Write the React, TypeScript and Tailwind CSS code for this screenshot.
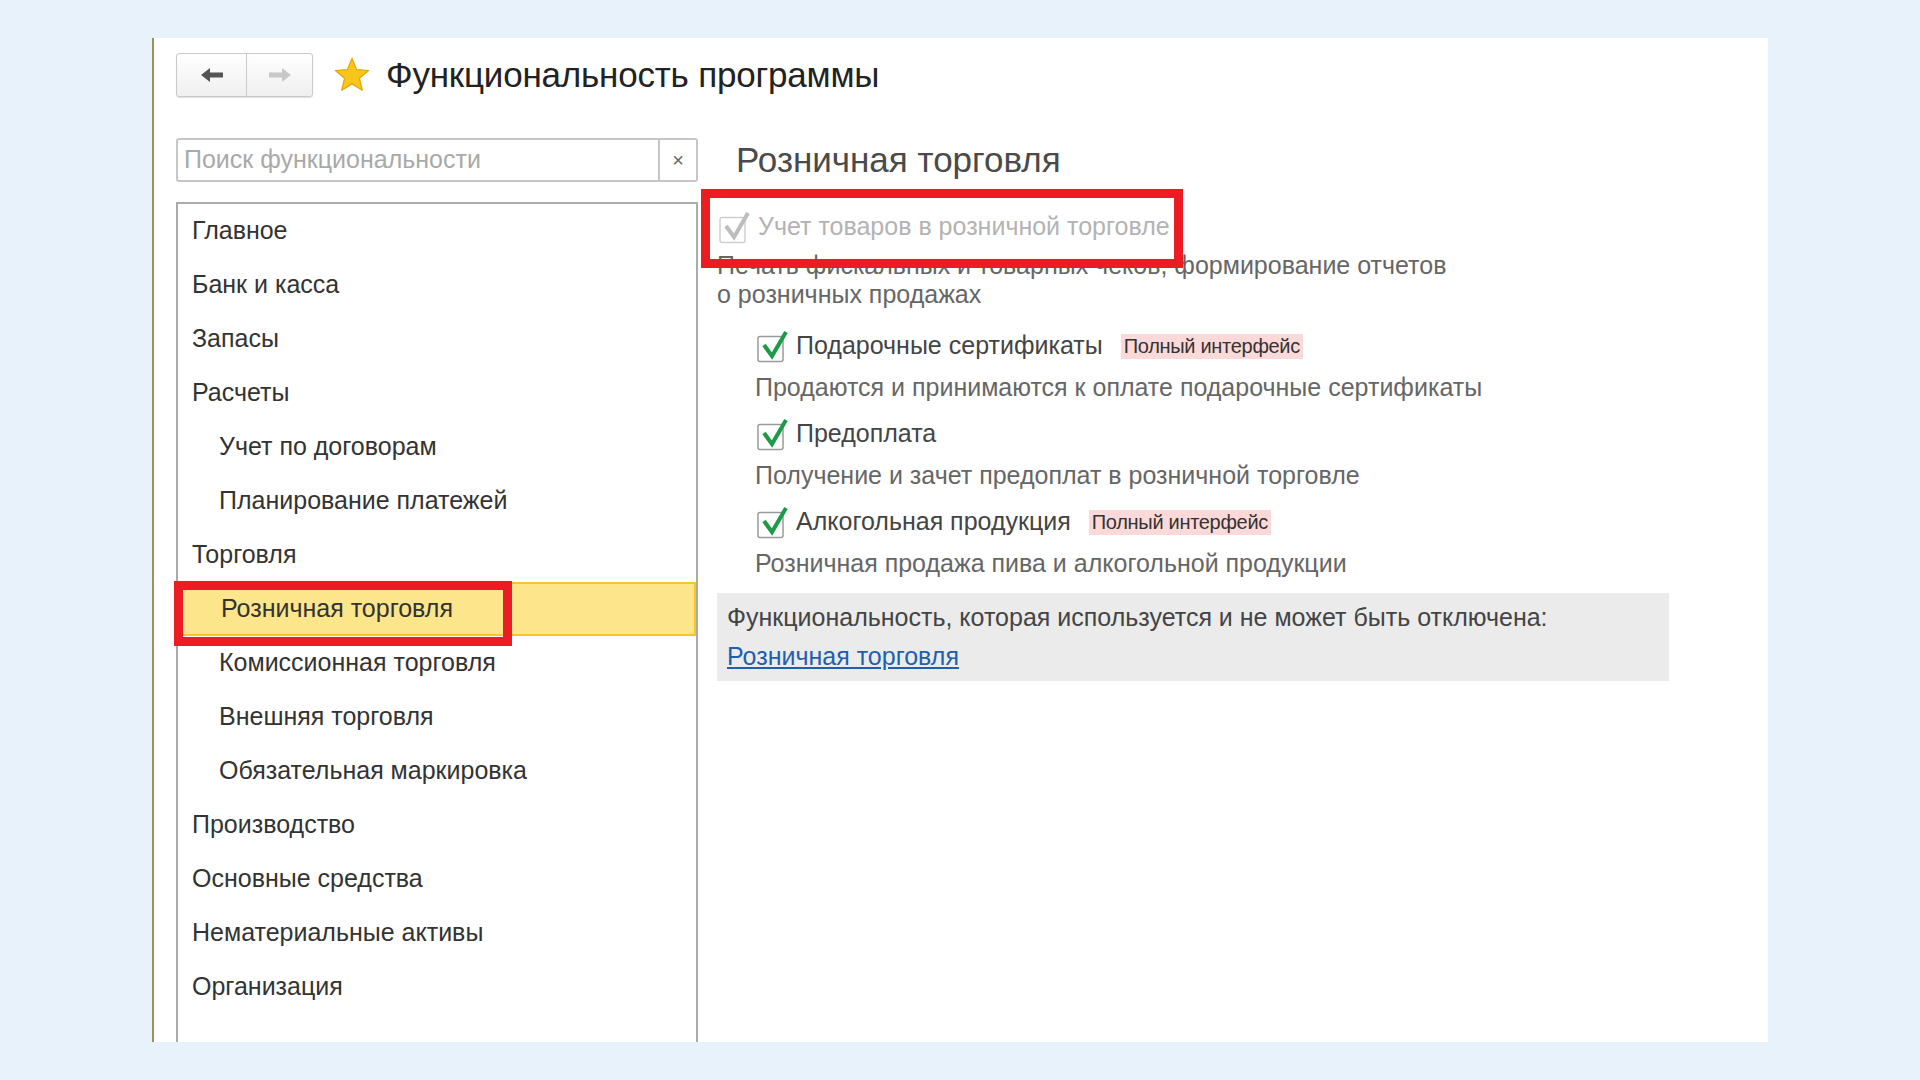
import React from 'react'

interface MenuItem {
  label: string
  level: 0 | 1
  selected?: boolean
}

const menu: MenuItem[] = [
  { label: 'Главное', level: 0 },
  { label: 'Банк и касса', level: 0 },
  { label: 'Запасы', level: 0 },
  { label: 'Расчеты', level: 0 },
  { label: 'Учет по договорам', level: 1 },
  { label: 'Планирование платежей', level: 1 },
  { label: 'Торговля', level: 0 },
  { label: 'Розничная торговля', level: 1, selected: true },
  { label: 'Комиссионная торговля', level: 1 },
  { label: 'Внешняя торговля', level: 1 },
  { label: 'Обязательная маркировка', level: 1 },
  { label: 'Производство', level: 0 },
  { label: 'Основные средства', level: 0 },
  { label: 'Нематериальные активы', level: 0 },
  { label: 'Организация', level: 0 },
]

interface Option {
  label: string
  description: string
  fullInterface?: boolean
}

const options: Option[] = [
  {
    label: 'Подарочные сертификаты',
    description: 'Продаются и принимаются к оплате подарочные сертификаты',
    fullInterface: true,
  },
  {
    label: 'Предоплата',
    description: 'Получение и зачет предоплат в розничной торговле',
  },
  {
    label: 'Алкогольная продукция',
    description: 'Розничная продажа пива и алкогольной продукции',
    fullInterface: true,
  },
]

const CheckBox: React.FC<{ disabled?: boolean }> = ({ disabled }) => (
  <svg width="32" height="32" viewBox="0 0 32 32" className="shrink-0 overflow-visible">
    <rect
      x="1"
      y="6.5"
      width="25"
      height="25"
      rx="2"
      fill="#fff"
      stroke={disabled ? '#cfcfcf' : '#9a9a9a'}
      strokeWidth="1.5"
    />
    <polyline
      points="7,15 15,26 29,2"
      fill="none"
      stroke={disabled ? '#bdbdbd' : '#1c9a47'}
      strokeWidth="4"
      strokeLinejoin="miter"
    />
  </svg>
)

const Badge = () => (
  <span className="ml-[18px] bg-[#fcd9d9] px-[3px] h-[25px] flex items-center text-[20px] text-[#333] tracking-[-0.3px]">
    Полный интерфейс
  </span>
)

export default function App() {
  return (
    <div className="relative w-full h-[1080px] bg-[#e8f2fb] pt-[38px] pl-[152px] font-['Liberation_Sans',Arial,sans-serif] overflow-hidden">
      <div className="w-[1616px] h-[1004px] bg-white border-l-2 border-[#9b8f5e] pl-[22px] flex flex-col">
        {/* header */}
        <div className="flex items-center h-[44px] mt-[15px]">
          <div className="flex h-[44px] w-[137px] rounded-[3px] border border-[#c9c9c9] bg-gradient-to-b from-white to-[#efefef] shadow-[0_1px_1px_rgba(0,0,0,0.12)]">
            <div className="w-[70px] flex items-center justify-center border-r border-[#c9c9c9]">
              <svg width="24" height="16" viewBox="0 0 24 16">
                <path d="M1 8 L10 1 V5.5 H23 V10.5 H10 V15 Z" fill="#555" />
              </svg>
            </div>
            <div className="flex-1 flex items-center justify-center">
              <svg width="24" height="16" viewBox="0 0 24 16">
                <path d="M23 8 L14 1 V5.5 H1 V10.5 H14 V15 Z" fill="#c8c8c8" />
              </svg>
            </div>
          </div>
          <svg width="38" height="38" viewBox="0 0 24 24" className="ml-[20px]">
            <path
              d="M12 1.5 L14.9 8.6 L22.5 9.2 L16.7 14.1 L18.5 21.6 L12 17.6 L5.5 21.6 L7.3 14.1 L1.5 9.2 L9.1 8.6 Z"
              fill="#f8c51c"
              stroke="#e6a700"
              strokeWidth="0.8"
              strokeLinejoin="round"
            />
          </svg>
          <h1 className="ml-[15px] text-[35px] text-[#222] tracking-[-0.2px]">Функциональность программы</h1>
        </div>

        <div className="flex flex-1 mt-[41px] min-h-0">
          {/* left column */}
          <div className="w-[522px] flex flex-col">
            <div className="h-[44px] flex border-2 border-[#c6c6c6] rounded-[3px]">
              <div className="flex-1 flex items-center pl-[6px] text-[25px] text-[#a9a9a9]">
                Поиск функциональности
              </div>
              <div className="w-[38px] border-l-2 border-[#c6c6c6] flex items-center justify-center text-[20px] text-[#666]">
                ×
              </div>
            </div>
            <div className="mt-[20px] flex-1 border-2 border-b-0 border-[#ababab]">
              {menu.map(item => (
                <div
                  key={item.label}
                  className={`h-[54px] flex items-center text-[25px] text-[#333] ${
                    item.level === 1 ? 'pl-[41px]' : 'pl-[14px]'
                  } ${item.selected ? 'bg-[#fde58b] border-2 border-[#f6c623]' : ''}`}
                >
                  {item.label}
                </div>
              ))}
            </div>
          </div>

          {/* right column */}
          <div className="flex-1 pl-[19px]">
            <h2 className="h-[44px] flex items-center pl-[19px] text-[35px] text-[#4a4a4a]">Розничная торговля</h2>

            <div className="mt-[28px] h-[34px] flex items-center pl-[2px]">
              <CheckBox disabled />
              <span className="ml-[7px] text-[25px] text-[#b3b3b3]">Учет товаров в розничной торговле</span>
            </div>
            <p className="mt-[7px] text-[25px] leading-[29px] text-[#666]">
              Печать фискальных и товарных чеков, формирование отчетов
              <br />о розничных продажах
            </p>

            <div className="mt-[20px]">
              {options.map(opt => (
                <div key={opt.label} className="mb-[12px] pl-[40px]">
                  <div className="h-[34px] flex items-center">
                    <CheckBox />
                    <span className="ml-[7px] text-[25px] text-[#444]">{opt.label}</span>
                    {opt.fullInterface && <Badge />}
                  </div>
                  <div className="mt-[8px] h-[34px] flex items-center -ml-[2px] text-[25px] text-[#666]">
                    {opt.description}
                  </div>
                </div>
              ))}
            </div>

            <div className="w-[952px] mt-[2px] bg-[#ebebeb] px-[10px] pt-[9px] pb-[10px]">
              <div className="leading-[30px] text-[25px] text-[#444]">
                Функциональность, которая используется и не может быть отключена:
              </div>
              <a href="#" className="block mt-[9px] leading-[30px] text-[25px] text-[#1f5fae] underline">
                Розничная торговля
              </a>
            </div>
          </div>
        </div>
      </div>

      {/* annotation frames */}
      <div className="absolute left-[174px] top-[581px] w-[338px] h-[65px] border-[9px] border-[#ec1c24]" />
      <div className="absolute left-[701px] top-[189px] w-[482px] h-[79px] border-[9px] border-[#ec1c24]" />
    </div>
  )
}
